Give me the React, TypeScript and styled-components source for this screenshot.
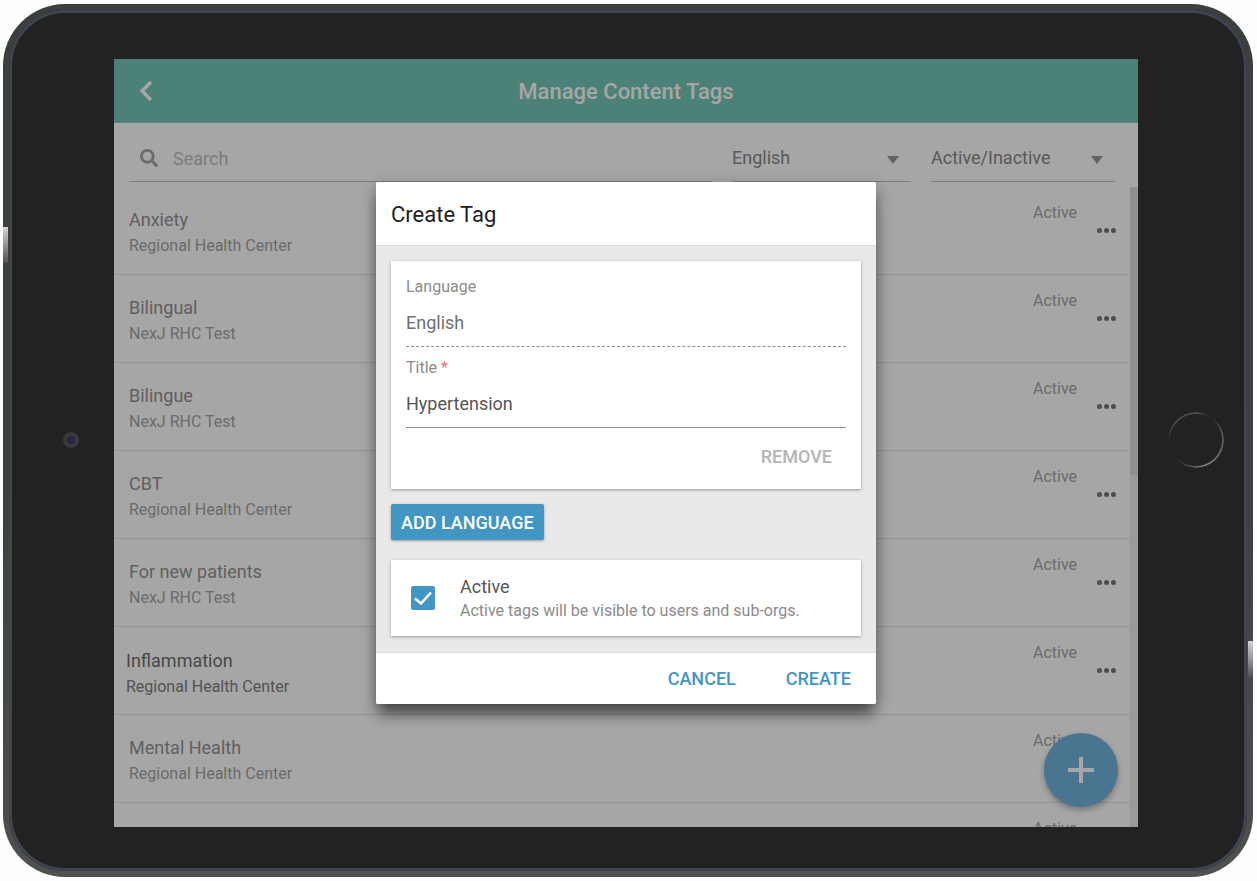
import React, { FC } from 'react';
import styled, { createGlobalStyle } from 'styled-components';
import { FaSearch } from 'react-icons/fa';

const GlobalStyle = createGlobalStyle`
  html, body {
    margin: 0;
    padding: 0;
    background: #fff;
    font-family: Roboto, 'Liberation Sans', sans-serif;
  }
`;

const Page = styled.div`
  width: 1257px;
  height: 881px;
  padding: 4px 4px 4px 3px;
  box-sizing: border-box;
  overflow: hidden;
  background: #fdfdfd;
`;

const TabletEdge = styled.div`
  position: relative;
  width: 1250px;
  height: 873px;
  padding: 6px;
  box-sizing: border-box;
  border-radius: 62px;
  background: linear-gradient(#3b403c 0%, #3d423e 60%, #4e514e 100%);
`;

const TabletBody = styled.div`
  position: relative;
  height: 100%;
  padding: 49px 109px 44px 105px;
  box-sizing: border-box;
  border-radius: 56px;
  background: #222;
  box-shadow: inset 0 0 0 3px #3f4450;
`;

const SideGlint = styled.div<{ $side: 'left' | 'right'; $top: number }>`
  position: absolute;
  top: ${({ $top }) => $top}px;
  ${({ $side }) => ($side === 'left' ? 'left: 0;' : 'right: 0;')}
  width: 5px;
  height: 36px;
  background: linear-gradient(#d4d4d4, #a8a8a8 35%, #4e514e);
`;

const Camera = styled.div`
  position: absolute;
  left: 54px;
  top: 422px;
  width: 16px;
  height: 16px;
  display: flex;
  align-items: center;
  justify-content: center;
  border-radius: 50%;
  background: #3a3a3a;

  &::after {
    content: '';
    width: 8px;
    height: 8px;
    border-radius: 50%;
    background: #2a2548;
  }
`;

const HomeButton = styled.div`
  position: absolute;
  left: 1159px;
  top: 402px;
  width: 56px;
  height: 56px;
  border-radius: 50%;
  background: conic-gradient(#4c4c4c 0deg, transparent 35deg, #505050 70deg, #808080 160deg, transparent 225deg, transparent 265deg, #4c4c4c 310deg, #4c4c4c 360deg);
  mask: radial-gradient(circle, transparent 25.5px, #000 26.5px);
`;

const Screen = styled.div`
  position: relative;
  width: 1024px;
  height: 768px;
  display: flex;
  flex-direction: column;
  overflow: hidden;
  background: #fff;
`;

const Header = styled.header`
  flex: none;
  position: relative;
  height: 64px;
  padding-top: 1px;
  display: flex;
  align-items: center;
  justify-content: center;
  box-sizing: border-box;
  background: #74c7b6;
  border-bottom: 1px solid #8fd0c3;
  color: #fff;
  font-size: 22px;
  font-weight: 500;
`;

const BackButton = styled.svg`
  position: absolute;
  left: 24px;
  top: 21px;
  width: 17px;
  height: 22px;
  fill: none;
  stroke: #fff;
  stroke-width: 3.4;
`;

const FilterBar = styled.div`
  flex: none;
  height: 59px;
  padding: 0 23px 0 15px;
  box-sizing: border-box;
  display: grid;
  grid-template-columns: 583px 179px 184px;
  column-gap: 20px;
`;

const FilterField = styled.div`
  height: 59px;
  display: flex;
  align-items: center;
  box-sizing: border-box;
  padding: 12px 0 0;
  border-bottom: 1px solid #bdbdbd;
  font-size: 18px;
  color: #8a8a8a;
`;

const SearchIcon = styled(FaSearch)`
  flex: none;
  width: 18px;
  height: 18px;
  margin: 0 15px 0 11px;
  color: #a6a6a6;
`;

const SearchText = styled.span`
  color: #c0c0c0;
`;

const SelectText = styled.span`
  flex: 1;
  margin-top: -2px;
`;

const Caret = styled.i`
  width: 0;
  height: 0;
  margin: 4px 12px 0 0;
  border-left: 6.5px solid transparent;
  border-right: 6.5px solid transparent;
  border-top: 8px solid #999;
`;

const ListArea = styled.div`
  flex: 1;
  min-height: 0;
  display: flex;
  padding-top: 5px;
`;

const TagList = styled.ul`
  flex: 1;
  margin: 0;
  padding: 0;
  list-style: none;
`;

const TagRow = styled.li`
  position: relative;
  height: 88px;
  box-sizing: border-box;
  display: flex;
  border-bottom: 1px solid #e4e4e4;
`;

const TagInfo = styled.div<{ $pressed?: boolean }>`
  flex: 1;
  padding: ${({ $pressed }) => ($pressed ? '22px 0 0 12px' : '21px 0 0 15px')};
  color: ${({ $pressed }) => ($pressed ? '#707070' : '#949494')};
`;

const TagTitle = styled.div`
  font-size: 18px;
  line-height: 24px;
`;

const TagOrg = styled.div<{ $pressed?: boolean }>`
  margin-top: 3px;
  font-size: 16px;
  line-height: 22px;
  color: ${({ $pressed }) => ($pressed ? '#808080' : '#a5a5a5')};
`;

const TagSide = styled.div`
  flex: none;
  width: 97px;
  padding-top: 16px;
  color: #a5a5a5;
  font-size: 16px;
  line-height: 20px;
`;

const Dots = styled.div`
  display: flex;
  gap: 2px;
  margin: 1px 0 0 64px;

  & > i {
    width: 5px;
    height: 5px;
    margin-top: 4px;
    border-radius: 50%;
    background: #777;
  }
`;

const ScrollTrack = styled.div`
  flex: none;
  width: 8px;
  background: #ededed;
`;

const ScrollThumb = styled.div`
  height: 288px;
  background: #dcdedc;
`;

const Fab = styled.div`
  position: absolute;
  right: 20px;
  bottom: 20px;
  width: 74px;
  height: 74px;
  display: flex;
  align-items: center;
  justify-content: center;
  border-radius: 50%;
  background: #72b4de;
  box-shadow: 0 3px 6px rgba(0, 0, 0, 0.3);
`;

const FabPlus = styled.svg`
  width: 26px;
  height: 26px;
  fill: #fff;
`;

const Overlay = styled.div`
  position: absolute;
  inset: 0;
  display: flex;
  align-items: center;
  justify-content: center;
  background: rgba(0, 0, 0, 0.35);
`;

const Dialog = styled.div`
  width: 500px;
  border-radius: 2px;
  overflow: hidden;
  background: #e9e9e9;
  box-shadow: 0 13px 14px -3px rgba(0, 0, 0, 0.48), 0 4px 16px rgba(0, 0, 0, 0.28);
`;

const DialogTitle = styled.h2`
  margin: 0;
  height: 64px;
  padding: 1px 15px 0;
  box-sizing: border-box;
  display: flex;
  align-items: center;
  background: #fff;
  border-bottom: 1px solid #dcdcdc;
  font-size: 22px;
  font-weight: 400;
  color: #212121;
`;

const DialogBody = styled.div`
  padding: 15px 15px 16px;
  display: flex;
  flex-direction: column;
  align-items: flex-start;
`;

const Card = styled.div`
  width: 470px;
  box-sizing: border-box;
  background: #fff;
  box-shadow: 0 1px 3px rgba(0, 0, 0, 0.35);
`;

const LanguageCard = styled(Card)`
  height: 228px;
  padding: 15px 15px 0;
  display: flex;
  flex-direction: column;
`;

const Field = styled.div<{ $readonly?: boolean }>`
  height: 71px;
  box-sizing: border-box;
  border-bottom: 1px ${({ $readonly }) => ($readonly ? 'dashed #8f8f8f' : 'solid #8f8f8f')};
`;

const FieldLabel = styled.div`
  font-size: 16px;
  line-height: 21px;
  color: #8b8b8b;
`;

const Required = styled.span`
  color: #f26d6d;
`;

const FieldValue = styled.div<{ $readonly?: boolean }>`
  margin-top: 14px;
  font-size: 18px;
  line-height: 24px;
  color: ${({ $readonly }) => ($readonly ? '#6f6f6f' : '#555')};
`;

const TitleField = styled.div`
  padding-top: 10px;
`;

const RemoveButton = styled.div`
  align-self: flex-end;
  margin: 18px 14px 0 0;
  font-size: 18px;
  line-height: 22px;
  font-weight: 500;
  color: #b5b5b5;
`;

const AddButton = styled.button`
  height: 36px;
  margin-top: 15px;
  padding: 0 10px;
  border: 0;
  border-radius: 2px;
  background: #4196c3;
  box-shadow: 0 1px 3px rgba(0, 0, 0, 0.35);
  color: #fff;
  font-family: inherit;
  font-size: 18px;
  font-weight: 500;
`;

const ActiveCard = styled(Card)`
  height: 76px;
  margin-top: 20px;
  padding: 0 20px;
  display: flex;
  align-items: center;
`;

const CheckBox = styled.div`
  flex: none;
  width: 24px;
  height: 24px;
  margin-right: 25px;
  display: flex;
  align-items: center;
  justify-content: center;
  border-radius: 2px;
  background: #4196c3;
`;

const CheckMark = styled.svg`
  width: 18px;
  height: 18px;
  fill: none;
  stroke: #fff;
  stroke-width: 2.6;
`;

const ActiveTitle = styled.div`
  font-size: 18px;
  line-height: 24px;
  color: #555;
`;

const ActiveHint = styled.div`
  font-size: 16px;
  line-height: 23px;
  color: #8b8b8b;
`;

const DialogFooter = styled.div`
  height: 52px;
  padding: 0 25px 0 0;
  box-sizing: border-box;
  display: flex;
  align-items: center;
  justify-content: flex-end;
  gap: 50px;
  background: #fff;
  border-top: 1px solid #dcdcdc;
`;

const FooterAction = styled.span`
  font-size: 18px;
  font-weight: 500;
  color: #4196c3;
`;

const TAGS = [
  { title: 'Anxiety', org: 'Regional Health Center' },
  { title: 'Bilingual', org: 'NexJ RHC Test' },
  { title: 'Bilingue', org: 'NexJ RHC Test' },
  { title: 'CBT', org: 'Regional Health Center' },
  { title: 'For new patients', org: 'NexJ RHC Test' },
  { title: 'Inflammation', org: 'Regional Health Center', pressed: true },
  { title: 'Mental Health', org: 'Regional Health Center' },
  { title: '', org: '' },
];

const App: FC = () => (
  <Page>
    <GlobalStyle />
    <TabletEdge>
      <TabletBody>
        <Screen>
          <Header>
            <BackButton viewBox='0 0 17 22'>
              <path d='M13 2 L4 11 L13 20' />
            </BackButton>
            Manage Content Tags
          </Header>
          <FilterBar>
            <FilterField>
              <SearchIcon />
              <SearchText>Search</SearchText>
            </FilterField>
            <FilterField>
              <SelectText>English</SelectText>
              <Caret />
            </FilterField>
            <FilterField>
              <SelectText>Active/Inactive</SelectText>
              <Caret />
            </FilterField>
          </FilterBar>
          <ListArea>
            <TagList>
              {TAGS.map((tag, index) => (
                <TagRow key={index}>
                  <TagInfo $pressed={tag.pressed}>
                    <TagTitle>{tag.title}</TagTitle>
                    <TagOrg $pressed={tag.pressed}>{tag.org}</TagOrg>
                  </TagInfo>
                  <TagSide>
                    Active
                    <Dots>
                      <i />
                      <i />
                      <i />
                    </Dots>
                  </TagSide>
                </TagRow>
              ))}
            </TagList>
            <ScrollTrack>
              <ScrollThumb />
            </ScrollTrack>
          </ListArea>
          <Fab>
            <FabPlus viewBox='0 0 26 26'>
              <path d='M11 0h4v11h11v4H15v11h-4V15H0v-4h11z' />
            </FabPlus>
          </Fab>
          <Overlay>
            <Dialog>
              <DialogTitle>Create Tag</DialogTitle>
              <DialogBody>
                <LanguageCard>
                  <Field $readonly>
                    <FieldLabel>Language</FieldLabel>
                    <FieldValue $readonly>English</FieldValue>
                  </Field>
                  <TitleField>
                    <Field>
                      <FieldLabel>
                        Title <Required>*</Required>
                      </FieldLabel>
                      <FieldValue>Hypertension</FieldValue>
                    </Field>
                  </TitleField>
                  <RemoveButton>REMOVE</RemoveButton>
                </LanguageCard>
                <AddButton>ADD LANGUAGE</AddButton>
                <ActiveCard>
                  <CheckBox>
                    <CheckMark viewBox='0 0 18 18'>
                      <path d='M1 9.5 L7 14.5 L17 3.5' />
                    </CheckMark>
                  </CheckBox>
                  <div>
                    <ActiveTitle>Active</ActiveTitle>
                    <ActiveHint>Active tags will be visible to users and sub-orgs.</ActiveHint>
                  </div>
                </ActiveCard>
              </DialogBody>
              <DialogFooter>
                <FooterAction>CANCEL</FooterAction>
                <FooterAction>CREATE</FooterAction>
              </DialogFooter>
            </Dialog>
          </Overlay>
        </Screen>
        <Camera />
        <HomeButton />
      </TabletBody>
      <SideGlint $side='left' $top={223} />
      <SideGlint $side='right' $top={637} />
    </TabletEdge>
  </Page>
);

export default App;
